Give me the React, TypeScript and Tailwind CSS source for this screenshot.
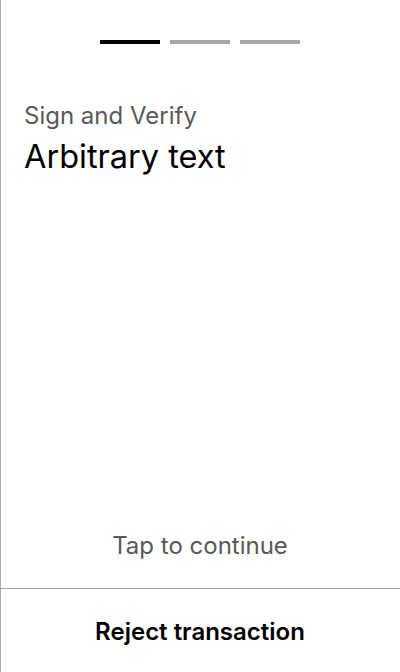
import React from "react";

export default function App() {
  const steps = [true, false, false];

  return (
    <div
      className="flex h-[672px] w-[400px] flex-col bg-white shadow-[inset_1px_0_0_#a8a8a8]"
      style={{ fontFamily: "Inter, 'Liberation Sans', sans-serif" }}
    >
      <div className="flex justify-center gap-[10px] pt-10">
        {steps.map((active, i) => (
          <div
            key={i}
            className={active ? "h-1 w-[60px] bg-black" : "h-1 w-[60px] bg-[#a8a8a8]"}
          />
        ))}
      </div>

      <div className="flex-1 px-6 pt-[56px]">
        <p className="text-[24px] leading-8 text-[#595959]">Sign and Verify</p>
        <p className="mt-[5px] text-[32.5px] leading-10 text-black">Arbitrary text</p>
      </div>

      <p className="pb-[26px] text-center text-[24px] leading-8 text-[#595959]">Tap to continue</p>

      <button className="h-[84px] w-full border-t border-[#a8a8a8] pt-[2px] text-center text-[24px] leading-8 font-semibold text-black">
        Reject transaction
      </button>
    </div>
  );
}
